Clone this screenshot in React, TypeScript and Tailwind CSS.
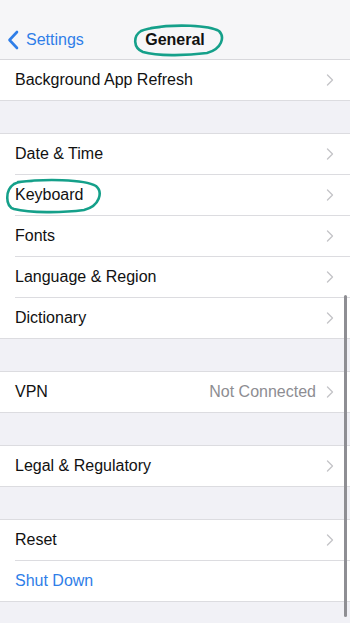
import { ChevronRight } from "lucide-react";

type Row = { label: string; detail?: string; chevron?: boolean; blue?: boolean; circled?: boolean };

const groups: Row[][] = [
  [
    { label: "Date & Time", chevron: true },
    { label: "Keyboard", chevron: true, circled: true },
    { label: "Fonts", chevron: true },
    { label: "Language & Region", chevron: true },
    { label: "Dictionary", chevron: true },
  ],
  [{ label: "VPN", detail: "Not Connected", chevron: true }],
  [{ label: "Legal & Regulatory", chevron: true }],
  [
    { label: "Reset", chevron: true },
    { label: "Shut Down", blue: true },
  ],
];

function Cell({ row, last }: { row: Row; last: boolean }) {
  return (
    <div className={"relative flex items-center pl-[15px] " + (last ? "h-[40px]" : "h-[41px]")}>
      <div
        className={
          "flex-1 h-full flex items-center pr-[10px] " +
          (last ? "" : "border-b border-[#dcdce0]")
        }
      >
        <span className={"flex-1 text-[16px] " + (row.blue ? "text-[#2f7ee8]" : "text-[#111]")}>
          {row.label}
        </span>
        {row.detail && <span className="text-[16px] text-[#8d8d92] mr-[4px]">{row.detail}</span>}
        {row.chevron && <ChevronRight className="w-[20px] h-[20px] text-[#c4c4c8]" strokeWidth={1.6} />}
      </div>
      {row.circled && (
        <svg className="absolute left-[4px] top-[3px] pointer-events-none" width="98" height="36" viewBox="0 0 98 36">
          <path
            d="M14 4 C40 1 80 1 92 8 C99 14 96 28 80 32 C58 35 26 35 10 31 C1 28 1 12 10 6 C14 4 20 3 28 3"
            fill="none"
            stroke="#15a08a"
            strokeWidth="2.6"
            strokeLinecap="round"
          />
        </svg>
      )}
    </div>
  );
}

export default function App() {
  return (
    <div className="relative w-[350px] h-[623px] bg-[#f1f1f6] overflow-hidden font-['Liberation_Sans',Arial,sans-serif]">
      {/* Nav bar */}
      <div className="relative h-[60px] flex items-end pb-[7px] border-b border-[#d8d8dc] bg-[#f6f6f8]">
        <div className="flex items-center text-[#2f7ee8] pl-[7px]">
          <svg width="13" height="20" viewBox="0 0 13 20" className="mr-[6px]">
            <polyline points="10,2 2.5,10 10,18" fill="none" stroke="currentColor" strokeWidth="2.6" strokeLinecap="round" strokeLinejoin="round" />
          </svg>
          <span className="text-[16px]">Settings</span>
        </div>
        <span className="absolute left-0 right-0 bottom-[7px] text-center text-[16px] font-bold text-[#111]">
          General
        </span>
        <svg className="absolute left-[131px] top-[23px] pointer-events-none" width="94" height="34" viewBox="0 0 94 34">
          <path
            d="M20 5 C44 1 78 2 88 8 C94 14 91 26 76 30 C54 33 26 33 12 29 C2 25 2 13 10 8 C14 6 20 5 30 4"
            fill="none"
            stroke="#15a08a"
            strokeWidth="2.6"
            strokeLinecap="round"
          />
        </svg>
      </div>

      {/* Background App Refresh */}
      <div className="bg-white border-b border-[#dcdce0]">
        <div className="h-[40px] flex items-center pl-[15px] pr-[10px]">
          <span className="flex-1 text-[16px] text-[#111]">Background App Refresh</span>
          <ChevronRight className="w-[20px] h-[20px] text-[#c4c4c8]" strokeWidth={1.6} />
        </div>
      </div>

      {groups.map((g, gi) => (
        <div key={gi} className="mt-[32px] bg-white border-y border-[#dcdce0]">
          {g.map((row, ri) => (
            <Cell key={row.label} row={row} last={ri === g.length - 1} />
          ))}
        </div>
      ))}

      {/* Scroll indicator */}
      <div className="absolute right-[3px] top-[295px] w-[3px] h-[322px] rounded-full bg-[#8e8e93]" />
    </div>
  );
}
